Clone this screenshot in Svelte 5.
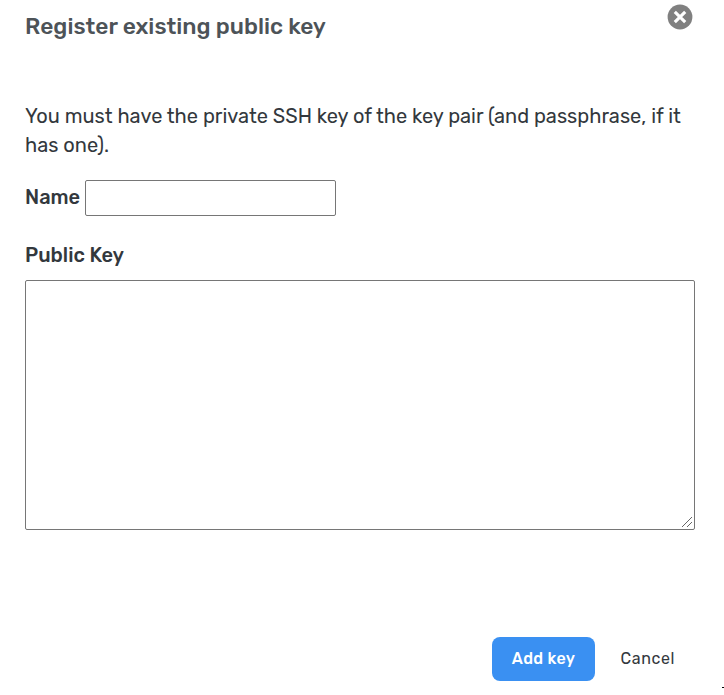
<script>
  let name = $state('');
  let publicKey = $state('');
</script>

<div class="dialog" role="dialog" aria-labelledby="dialog-title">
  <header>
    <h2 id="dialog-title">Register existing public key</h2>
    <button class="close" aria-label="Close">
      <svg width="26" height="26" viewBox="0 0 26 26">
        <circle cx="13" cy="13" r="12.4" fill="#808080" />
        <path d="M7.8 7.8 18.2 18.2M18.2 7.8 7.8 18.2" stroke="#fff" stroke-width="3.1" />
      </svg>
    </button>
  </header>

  <p>You must have the private SSH key of the key pair (and passphrase, if it has one).</p>

  <div class="field">
    <label for="key-name">Name</label>
    <input id="key-name" type="text" bind:value={name} />
  </div>

  <label class="key-label" for="public-key">Public Key</label>
  <div class="key-box">
    <textarea id="public-key" bind:value={publicKey}></textarea>
    <svg class="grip" width="12" height="12" viewBox="0 0 12 12" shape-rendering="crispEdges">
      <path d="M1 11 11 1M6 11 11 6" stroke="#666" stroke-width="1" />
    </svg>
  </div>

  <footer>
    <button class="primary">Add key</button>
    <button class="cancel">Cancel</button>
  </footer>
  <span class="corner"></span>
</div>

<style>
  :global(body) {
    margin: 0;
    background: #fff;
  }

  .dialog {
    position: relative;
    box-sizing: border-box;
    width: 724px;
    height: 695px;
    padding: 4px 29px 0 25px;
    overflow: hidden;
    color: #33383d;
    font-family: Rubik, Roboto, sans-serif;
    font-size: 20px;
    line-height: 29px;
  }

  header {
    display: flex;
    justify-content: space-between;
    align-items: flex-start;
    height: 98px;
  }

  h2 {
    margin: 8px 0 0;
    color: #4d5358;
    font-size: 22.8px;
    font-weight: 500;
    line-height: 29px;
    white-space: nowrap;
  }

  button {
    padding: 0;
    border: 0;
    background: none;
    color: inherit;
    font: inherit;
    cursor: pointer;
  }

  .close {
    width: 26px;
    height: 26px;
    margin-right: 2px;
  }

  .close svg {
    display: block;
  }

  p {
    margin: 0 0 20px;
  }

  .field {
    display: flex;
    height: 36px;
  }

  label {
    font-weight: 500;
  }

  .field label {
    width: 60px;
    padding-top: 3px;
  }

  input,
  textarea {
    box-sizing: border-box;
    border: 1px solid #767676;
    border-radius: 2px;
    background: #fff;
    font: inherit;
    outline: none;
  }

  input {
    width: 251px;
    height: 36px;
    padding: 1px 2px;
  }

  .key-label {
    display: block;
    margin: 25px 0 10px;
  }

  .key-box {
    position: relative;
    width: 670px;
    height: 250px;
  }

  textarea {
    display: block;
    width: 100%;
    height: 100%;
    margin: 0;
    padding: 2px;
    resize: none;
  }

  .grip {
    position: absolute;
    right: 2px;
    bottom: 2px;
    pointer-events: none;
  }

  footer {
    display: flex;
    justify-content: flex-end;
    margin-top: 107px;
    padding-right: 20px;
    font-size: 16px;
  }

  button.primary {
    width: 103px;
    height: 44px;
    margin-right: 25.5px;
    padding-bottom: 2px;
    border-radius: 8px;
    background: #3a90f2;
    color: #fff;
    font-weight: 500;
    letter-spacing: 0.4px;
  }

  button.cancel {
    height: 44px;
    padding-bottom: 2px;
    letter-spacing: 0.6px;
  }

  .corner {
    position: absolute;
    right: 0;
    bottom: 7px;
    width: 2px;
    height: 1px;
    background: #000;
  }
</style>
